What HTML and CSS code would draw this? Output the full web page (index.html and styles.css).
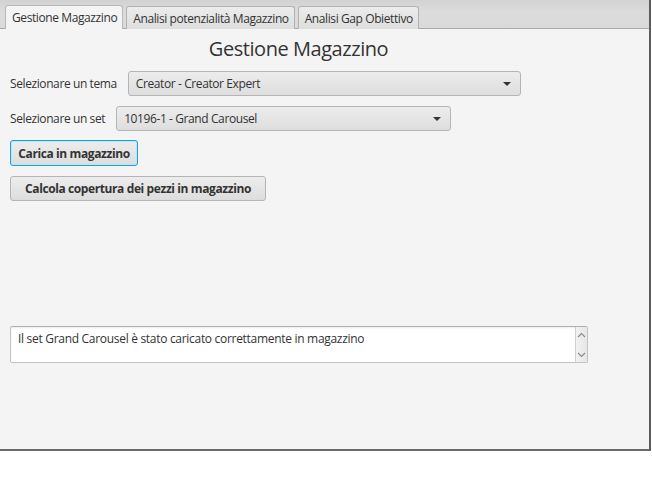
FILE: index.html
```html
<!DOCTYPE html>
<html lang="it">
<head>
<meta charset="utf-8">
<title>Gestione Magazzino</title>
<link rel="stylesheet" href="styles.css">
</head>
<body>
<div class="app">
  <div class="tabbar">
    <div class="tab selected">Gestione Magazzino</div>
    <div class="tab">Analisi potenzialità Magazzino</div>
    <div class="tab">Analisi Gap Obiettivo</div>
  </div>
  <div class="content">
    <h1 class="title">Gestione Magazzino</h1>
    <div class="row">
      <span class="label">Selezionare un tema</span>
      <div class="combo combo-tema"><span>Creator - Creator Expert</span><span class="arrow"></span></div>
    </div>
    <div class="row row-set">
      <span class="label">Selezionare un set</span>
      <div class="combo combo-set"><span>10196-1 - Grand Carousel</span><span class="arrow"></span></div>
    </div>
    <button class="btn focused">Carica in magazzino</button>
    <button class="btn btn-calc">Calcola copertura dei pezzi in magazzino</button>
    <div class="textarea">
      <div class="ta-text">Il set Grand Carousel è stato caricato correttamente in magazzino</div>
      <div class="scrollbar">
        <svg class="chev" width="9" height="6" viewBox="0 0 9 6"><path d="M1 5 L4.5 1.5 L8 5" fill="none" stroke="#8a8a8a" stroke-width="1.1"/></svg>
        <svg class="chev" width="9" height="6" viewBox="0 0 9 6"><path d="M1 1 L4.5 4.5 L8 1" fill="none" stroke="#8a8a8a" stroke-width="1.1"/></svg>
      </div>
    </div>
  </div>
</div>
</body>
</html>
```
FILE: styles.css
```css
html, body {
  margin: 0;
  padding: 0;
  background: #ffffff;
}
body {
  font-family: "Open Sans", "Noto Sans", sans-serif;
  font-size: 12px;
  letter-spacing: -0.4px;
  color: #333333;
}
.app {
  width: 649px;
  height: 449px;
  background: #f4f4f4;
  border-right: 2px solid #5c5c5c;
  border-bottom: 2px solid #6a6a6a;
  display: flex;
  flex-direction: column;
}
.tabbar {
  height: 28px;
  background: linear-gradient(#d2d2d2, #dcdcdc 40%, #dadada);
  border-bottom: 1px solid #a9a9a9;
  display: flex;
  align-items: flex-end;
  gap: 3px;
  padding-left: 5px;
  flex: none;
}
.tab {
  height: 22px;
  margin-bottom: -1px;
  padding: 0 5px 0 6px;
  border: 1px solid #b2b2b2;
  border-bottom: none;
  border-radius: 3px 3px 0 0;
  background: linear-gradient(#ececec, #dedede);
  display: flex;
  align-items: center;
  color: #333;
  white-space: nowrap;
  box-sizing: content-box;
}
.tab.selected {
  background: #f4f4f4;
  border-color: #b8b8b8;
  height: 23px;
}
.content {
  padding: 8px 10px 0 10px;
  display: flex;
  flex-direction: column;
  align-items: flex-start;
}
.title {
  align-self: stretch;
  margin: 0;
  text-align: center;
  font-weight: normal;
  font-size: 20px;
  letter-spacing: -0.45px;
  line-height: 24px;
  color: #333;
  padding-right: 52px;
}
.row {
  display: flex;
  align-items: center;
  gap: 11px;
  margin-top: 10px;
}
.label {
  color: #333;
}
.combo {
  height: 23px;
  border: 1px solid #b5b5b5;
  border-radius: 3px;
  background: linear-gradient(#ececec, #dedede);
  display: flex;
  align-items: center;
  justify-content: space-between;
  padding: 0 8px 0 7px;
  box-sizing: content-box;
  color: #333;
}
.combo-tema { width: 376px; }
.combo-set { width: 318px; }
.arrow {
  width: 0;
  height: 0;
  border-left: 4px solid transparent;
  border-right: 4px solid transparent;
  border-top: 4px solid #333;
  margin-right: 1px;
}
.btn {
  font-family: inherit;
  font-size: 12px;
  letter-spacing: -0.4px;
  font-weight: bold;
  color: #333;
  height: 25px;
  margin: 9px 0 0 0;
  border: 1px solid #b5b5b5;
  border-radius: 3px;
  background: linear-gradient(#ededed, #dddddd);
  padding: 0;
  white-space: nowrap;
  text-align: center;
  cursor: default;
}
.btn.focused {
  border-color: #1aa3da;
  box-shadow: inset 0 0 0 1px #bfe4f5;
  width: 128px;
  height: 26px;
}
.btn-calc {
  margin-top: 10px;
  width: 256px;
}
.textarea {
  margin-top: 125px;
  width: 576px;
  height: 35px;
  border: 1px solid #c3c3c3;
  border-top-color: #b0b0b0;
  border-radius: 2px;
  background: #ffffff;
  box-shadow: inset 0 1px 2px rgba(0,0,0,0.08);
  display: flex;
  justify-content: space-between;
}
.ta-text {
  padding: 4px 0 0 7px;
  line-height: 16px;
  letter-spacing: -0.3px;
  color: #333;
}
.scrollbar {
  width: 11px;
  border-left: 1px solid #cfcfcf;
  background: linear-gradient(90deg, #f2f2f2, #e6e6e6);
  display: flex;
  flex-direction: column;
  justify-content: space-between;
  align-items: center;
  padding: 5px 0 4px 0;
}
.chev { display: block; }
```
